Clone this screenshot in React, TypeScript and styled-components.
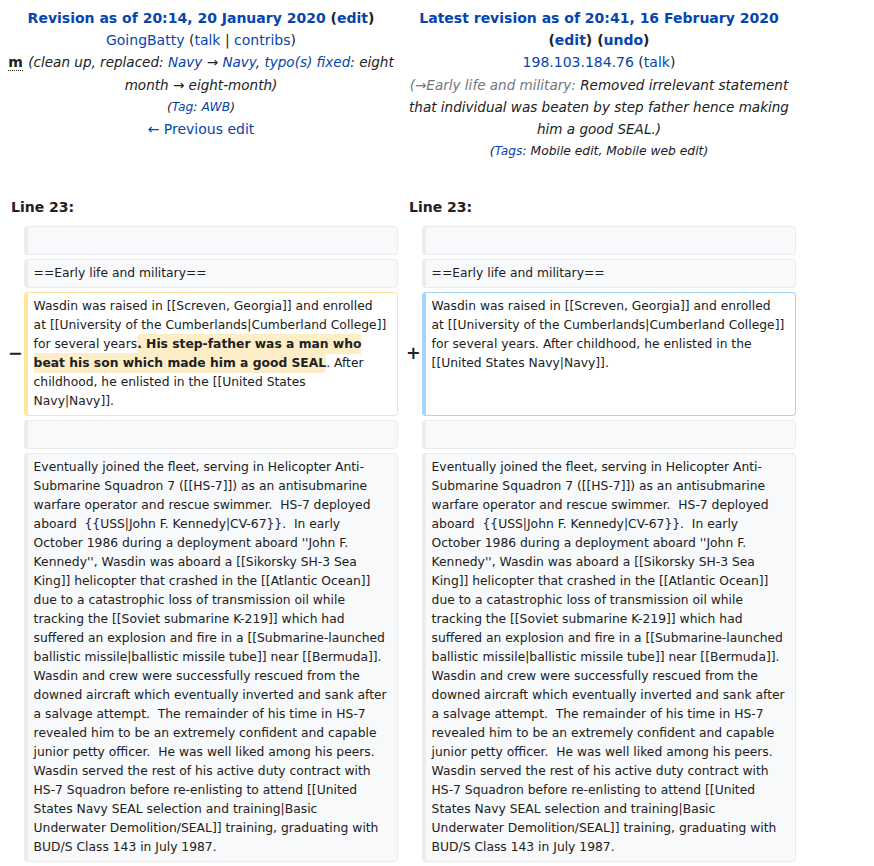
import React from 'react';
import styled, { createGlobalStyle } from 'styled-components';

const GlobalStyle = createGlobalStyle`
  html, body { margin: 0; padding: 0; background: #ffffff; }
  body {
    font-family: "DejaVu Sans", "Noto Sans", sans-serif;
    color: #202122;
    font-size: 14px;
  }
`;

const DiffTable = styled.div`
  display: grid;
  grid-template-columns: 15.6px 374.4px 15.6px 374.4px;
  gap: 4px;
  padding: 4px;
  width: 800px;
  box-sizing: border-box;
`;

type Side = 'old' | 'new';

const Header = styled.div<{ $side: Side }>`
  grid-column: ${(p) => (p.$side === 'old' ? '1 / 3' : '3 / 5')};
  text-align: center;
  line-height: 22.2px;
  padding-top: 3px;
`;

const Title = styled.div`
  font-weight: bold;
`;

const HeaderLine = styled.div``;

const Link = styled.a`
  color: #0645ad;
  text-decoration: none;
  cursor: pointer;
`;

const Comment = styled.span`
  font-style: italic;
  font-size: 13.55px;
`;

const AutoComment = styled.span`
  color: #72777d;
`;

const Minor = styled.abbr`
  font-weight: bold;
  text-decoration: none;
  border-bottom: 1px dotted #202122;
  margin-right: 1px;
`;

const TagLine = styled.div`
  font-style: italic;
  font-size: 12.3px;
`;

const LineNo = styled.div<{ $side: Side }>`
  grid-column: ${(p) => (p.$side === 'old' ? '1 / 3' : '3 / 5')};
  font-weight: bold;
  line-height: 22.2px;
  padding: 30px 0 3px 7px;
`;

const Marker = styled.div`
  display: flex;
  align-items: center;
  justify-content: flex-end;
  font-weight: bold;
  font-size: 17.5px;
  line-height: 1;
  margin-right: -3px;
`;

type Kind = 'context' | 'deleted' | 'added';

const borderFor: Record<Kind, string> = {
  context: '#eaecf0',
  deleted: '#ffe49c',
  added: '#a3d3ff',
};

const Line = styled.div<{ $kind: Kind }>`
  font-size: 12.32px;
  line-height: 19px;
  white-space: pre-wrap;
  overflow-wrap: break-word;
  padding: 4px 6px;
  border-style: solid;
  border-width: 1px 1px 1px 4px;
  border-radius: 4px;
  border-color: ${(p) => borderFor[p.$kind]};
  background: ${(p) => (p.$kind === 'context' ? '#f8f9fa' : '#ffffff')};
  color: #202122;
`;

const Change = styled.del`
  text-decoration: none;
  font-weight: bold;
  background: #feeec8;
  border-radius: 4px;
  padding: 3px 0;
`;

const bigText =
  "Eventually joined the fleet, serving in Helicopter Anti-\nSubmarine Squadron 7 ([[HS-7]]) as an antisubmarine\nwarfare operator and rescue swimmer.  HS-7 deployed\naboard  {{USS|John F. Kennedy|CV-67}}.  In early\nOctober 1986 during a deployment aboard ''John F.\nKennedy'', Wasdin was aboard a [[Sikorsky SH-3 Sea\nKing]] helicopter that crashed in the [[Atlantic Ocean]]\ndue to a catastrophic loss of transmission oil while\ntracking the [[Soviet submarine K-219]] which had\nsuffered an explosion and fire in a [[Submarine-launched\nballistic missile|ballistic missile tube]] near [[Bermuda]].\nWasdin and crew were successfully rescued from the\ndowned aircraft which eventually inverted and sank after\na salvage attempt.  The remainder of his time in HS-7\nrevealed him to be an extremely confident and capable\njunior petty officer.  He was well liked among his peers.\nWasdin served the rest of his active duty contract with\nHS-7 Squadron before re-enlisting to attend [[United\nStates Navy SEAL selection and training|Basic\nUnderwater Demolition/SEAL]] training, graduating with\nBUD/S Class 143 in July 1987.";

const ContextRow: React.FC<{ text?: string }> = ({ text }) => (
  <>
    <Marker />
    <Line $kind="context">{text ? text : <br />}</Line>
    <Marker />
    <Line $kind="context">{text ? text : <br />}</Line>
  </>
);

export default function App() {
  return (
    <>
      <GlobalStyle />
      <DiffTable>
        <Header $side="old">
          <Title>
            <Link>Revision as of 20:14, 20 January 2020</Link> (<Link>edit</Link>)
          </Title>
          <HeaderLine>
            <Link>GoingBatty</Link> (<Link>talk</Link> | <Link>contribs</Link>)
          </HeaderLine>
          <HeaderLine>
            <Minor title="This is a minor edit">m</Minor>{' '}
            <Comment>
              (clean up, replaced: <Link>Navy</Link> → <Link>Navy</Link>,{' '}
              <Link>typo(s) fixed</Link>: eight month → eight-month)
            </Comment>
          </HeaderLine>
          <TagLine>
            (<Link>Tag</Link>: <Link>AWB</Link>)
          </TagLine>
          <HeaderLine>
            <Link>← Previous edit</Link>
          </HeaderLine>
        </Header>
        <Header $side="new">
          <Title>
            <Link>Latest revision as of 20:41, 16 February 2020</Link> (<Link>edit</Link>) (
            <Link>undo</Link>)
          </Title>
          <HeaderLine>
            <Link>198.103.184.76</Link> (<Link>talk</Link>)
          </HeaderLine>
          <HeaderLine>
            <Comment>
              <AutoComment>(→Early life and military: </AutoComment>Removed irrelevant statement
              that individual was beaten by step father hence making him a good SEAL.)
            </Comment>
          </HeaderLine>
          <TagLine>
            (<Link>Tags</Link>: Mobile edit, Mobile web edit)
          </TagLine>
        </Header>

        <LineNo $side="old">Line 23:</LineNo>
        <LineNo $side="new">Line 23:</LineNo>

        <ContextRow />
        <ContextRow text="==Early life and military==" />

        <Marker>−</Marker>
        <Line $kind="deleted">
          {'Wasdin was raised in [[Screven, Georgia]] and enrolled\nat [[University of the Cumberlands|Cumberland College]]\nfor several years'}
          <Change>{'. His step-father was a man who\nbeat his son which made him a good SEAL'}</Change>
          {'. After\nchildhood, he enlisted in the [[United States\nNavy|Navy]].'}
        </Line>
        <Marker>+</Marker>
        <Line $kind="added">
          {'Wasdin was raised in [[Screven, Georgia]] and enrolled\nat [[University of the Cumberlands|Cumberland College]]\nfor several years. After childhood, he enlisted in the\n[[United States Navy|Navy]].'}
        </Line>

        <ContextRow />
        <ContextRow text={bigText} />
      </DiffTable>
    </>
  );
}
